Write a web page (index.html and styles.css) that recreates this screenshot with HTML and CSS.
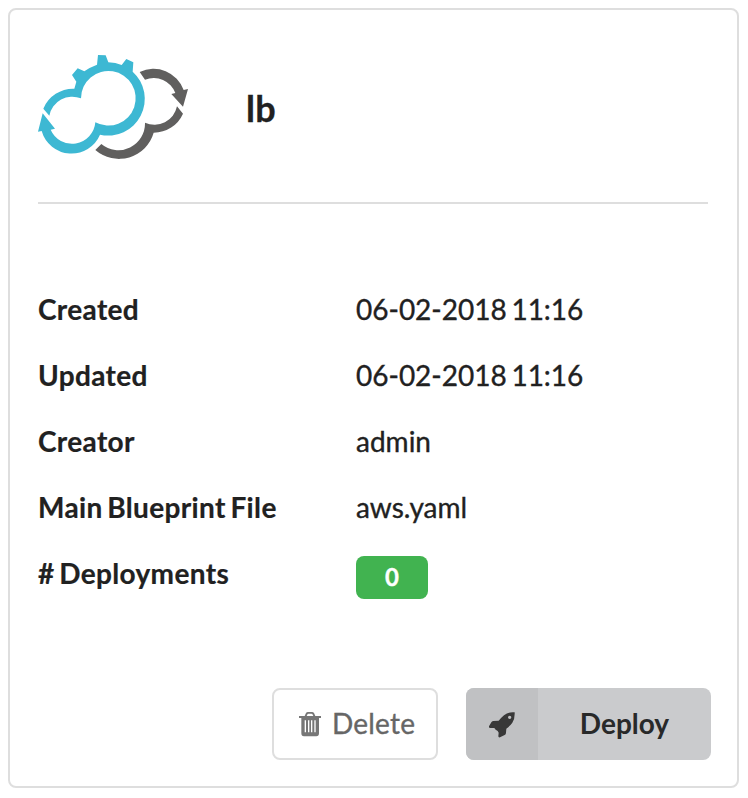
FILE: index.html
```html
<!DOCTYPE html>
<html lang="en">
<head>
<meta charset="utf-8">
<title>lb</title>
<link rel="stylesheet" href="styles.css">
</head>
<body>
<main class="card">
  <header class="header">
    <svg class="logo" viewBox="0 0 510 375" aria-hidden="true">
      <path fill="#3db8d3" d="M40 191A97 97 0 0 1 133 131L139 110L126 90L143 70L163 79Q179 67 201 59L204 30L227 31L235 52Q257 53 275 60L289 42L310 52L308 80A110 110 0 0 1 210 269A93 93 0 0 1 35 258L24 260L38 205L75 251L62 254A70 70 0 0 0 196 232A82 82 0 1 0 153 160A70 70 0 0 0 58 212Z"/>
      <path fill="#605f5e" d="M329 81A96 96 0 0 1 461 135L474 132L459 185L424 147L436 144A69 69 0 0 0 345 104ZM441 184L459 206A96 96 0 0 1 371 263A108 108 0 0 1 196 315L214 297A80 80 0 0 0 345 233A69 69 0 0 0 441 184Z"/>
    </svg>
    <h1 class="title">lb</h1>
  </header>
  <dl class="details">
    <dt>Created</dt><dd>06-02-2018 11:16</dd>
    <dt>Updated</dt><dd>06-02-2018 11:16</dd>
    <dt>Creator</dt><dd>admin</dd>
    <dt>Main Blueprint File</dt><dd>aws.yaml</dd>
    <dt># Deployments</dt><dd><span class="count">0</span></dd>
  </dl>
  <footer class="actions">
    <button class="button delete" type="button">
      <svg class="trash" viewBox="0 0 66 75" aria-hidden="true">
        <path fill="#767676" fill-rule="evenodd" d="M0 12H17L21 3Q23 0 27 0H39Q43 0 45 3L49 12H66V18H60V64Q60 73 52 73H15Q7 73 7 64V18H0ZM23 12H43L40 6Q39 5 37 5H29Q27 5 26 6ZM17 25V61H21V25ZM27 25V61H31V25ZM36 25V61H40V25ZM46 25V61H50V25Z"/>
      </svg>
      <span class="caption">Delete</span>
    </button>
    <button class="button deploy" type="button">
      <span class="icon-cell">
        <svg class="rocket" viewBox="0 0 78 78" aria-hidden="true">
          <path fill="#383838" fill-rule="evenodd" d="M77 1Q58-1 45 10Q37 17 29 26L12 27Q9 28 7 31L0 43Q-1 49 5 48L16 48L20 53L26 57L29 62L28 73Q28 77 33 76L47 69Q51 67 51 62L52 50Q63 42 70 32Q78 20 77 1ZM62 11A5 5 0 1 1 62 21A5 5 0 1 1 62 11Z"/>
        </svg>
      </span>
      <span class="label">Deploy</span>
    </button>
  </footer>
</main>
</body>
</html>
```
FILE: styles.css
```css
* {
  box-sizing: border-box;
}

body {
  margin: 0;
  padding: 8px;
  background: #fff;
  color: #212121;
  font: 28px/40px Lato, "Liberation Sans", sans-serif;
}

.card {
  width: 731px;
  height: 780px;
  padding: 28px;
  border: 2px solid #dedede;
  border-radius: 8px;
  display: flex;
  flex-direction: column;
}

.header {
  width: 670px;
  height: 166px;
  flex: none;
  border-bottom: 2px solid #dedede;
  display: flex;
}

.logo {
  width: 170px;
  height: 125px;
  margin: 7px 0 0 -8px;
  flex: none;
}

.title {
  margin: 50px 0 0 46px;
  font-size: 36px;
  line-height: 40px;
  font-weight: 700;
  letter-spacing: 0.3px;
  -webkit-text-stroke: 0.3px currentColor;
}

.details {
  margin: 85px 0 0;
  display: grid;
  grid-template-columns: 318px 1fr;
  grid-auto-rows: 40px;
  row-gap: 26px;
  word-spacing: -2.5px;
}

.details dt {
  font-weight: 700;
  letter-spacing: 0.35px;
  -webkit-text-stroke: 0.2px currentColor;
}

.details dd {
  margin: 0;
  -webkit-text-stroke: 0.35px currentColor;
}

.count {
  display: block;
  width: 72px;
  height: 43px;
  margin-top: 3px;
  border-radius: 8px;
  background: #41b350;
  color: #fff;
  font-size: 24px;
  line-height: 42px;
  font-weight: 700;
  text-align: center;
}

.actions {
  width: 673px;
  margin-top: 95px;
  display: flex;
  justify-content: flex-end;
  gap: 28px;
}

.button {
  height: 72px;
  padding: 0;
  border: 0;
  border-radius: 8px;
  display: flex;
  align-items: center;
  font: inherit;
}

.delete {
  width: 166px;
  padding-left: 25px;
  border: 2px solid #dedede;
  background: #fff;
  color: #666;
  letter-spacing: 0.2px;
  -webkit-text-stroke: 0.35px currentColor;
}

.trash {
  width: 22px;
  height: 25px;
  margin-right: 11px;
  flex: none;
}

.caption {
  margin-top: -2px;
}

.deploy {
  width: 245px;
  overflow: hidden;
  background: #cacbcd;
  color: #282929;
  font-weight: 700;
}

.icon-cell {
  width: 72px;
  height: 72px;
  background: #c0c1c3;
  display: flex;
  align-items: center;
  justify-content: center;
}

.rocket {
  width: 26px;
  height: 26px;
  margin-top: 1px;
}

.label {
  flex: 1;
  margin-top: -2px;
  text-align: center;
}
```
